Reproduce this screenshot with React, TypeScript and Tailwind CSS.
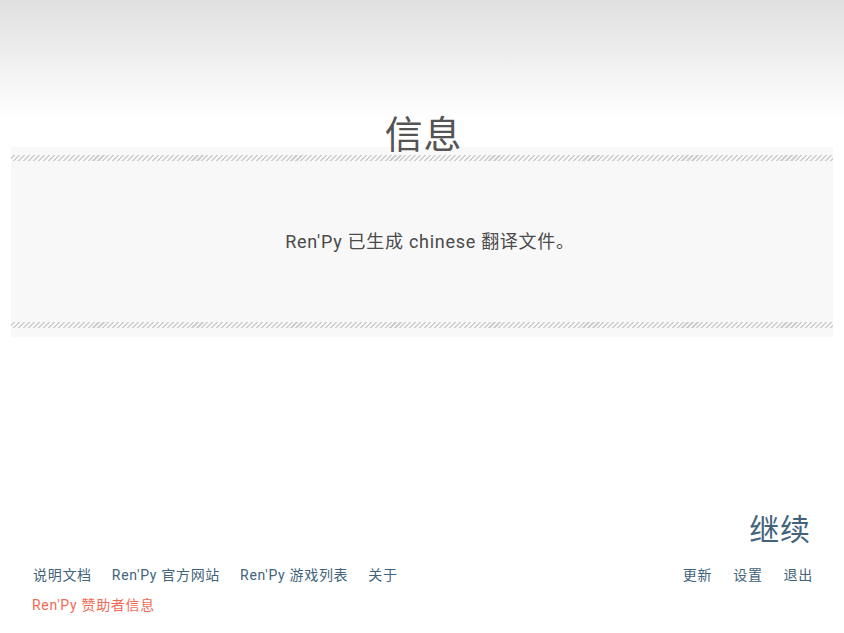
import React from "react";

const font = { fontFamily: "Roboto, 'Noto Sans CJK SC', sans-serif" };

function Stripe() {
  return (
    <div className="h-[6px] w-full bg-[repeating-linear-gradient(135deg,#f8f8f8_0px,#f8f8f8_2px,#cfcfcf_2px,#cfcfcf_3.5px)]" />
  );
}

export default function App() {
  return (
    <div
      style={font}
      className="relative flex h-[633px] w-full flex-col bg-[linear-gradient(180deg,#e0e0e0_0px,#ffffff_120px,#ffffff_100%)]"
    >
      <div className="relative z-10 pt-[114px] pl-[3px] text-center text-[38px] leading-[42px] tracking-[0.02em] text-[#545454]">
        信息
      </div>
      <div className="mx-[11px] mt-[-9px] flex h-[190px] flex-col bg-[#f8f8f8] pt-[8px] pb-[9px]">
        <Stripe />
        <div className="flex flex-1 items-center justify-center pl-[16px] text-[18px] tracking-[0.04em] text-[#4a4a4a]">
          Ren'Py 已生成 chinese 翻译文件。
        </div>
        <Stripe />
      </div>
      <div className="flex-1" />
      <div className="flex justify-end pr-[33px] text-[30px] leading-[36px] tracking-[0.03em] text-[#42637b]">
        <span>继续</span>
      </div>
      <div className="mt-[17px] flex items-center justify-between pl-[33px] pr-[31px] text-[14px] leading-[20px] tracking-[0.05em] text-[#42637b]">
        <div className="flex gap-[20px]">
          <span>说明文档</span>
          <span>Ren'Py 官方网站</span>
          <span>Ren'Py 游戏列表</span>
          <span>关于</span>
        </div>
        <div className="flex gap-[21px]">
          <span>更新</span>
          <span>设置</span>
          <span>退出</span>
        </div>
      </div>
      <div className="mt-[10px] mb-[18px] pl-[32px] text-[14px] leading-[20px] tracking-[0.05em] text-[#f06a55]">
        Ren'Py 赞助者信息
      </div>
    </div>
  );
}
